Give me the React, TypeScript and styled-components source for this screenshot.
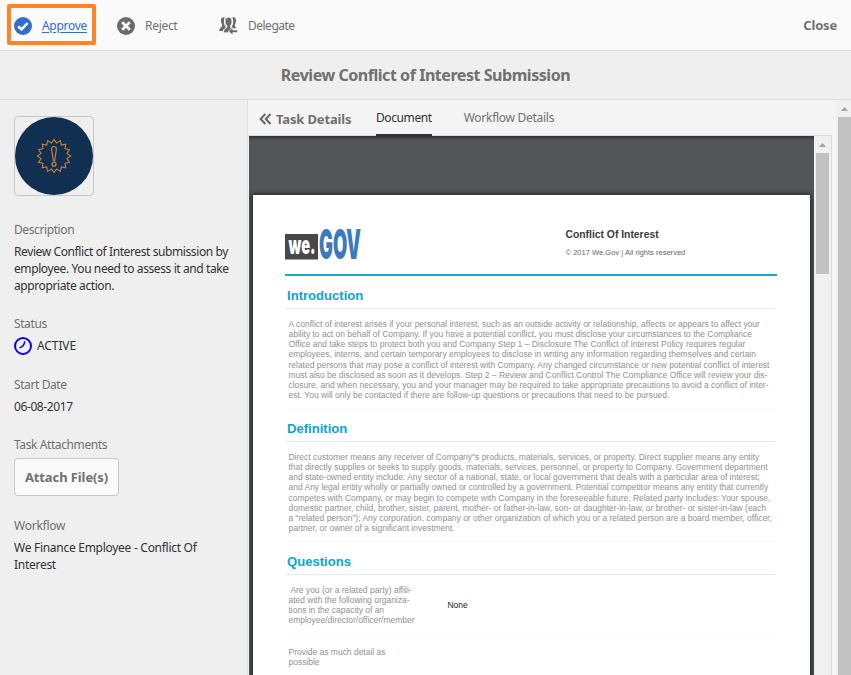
import React from "react";
import styled, { createGlobalStyle } from "styled-components";

const GlobalStyle = createGlobalStyle`
  * { box-sizing: border-box; }
  html, body { margin: 0; padding: 0; }
  body { font-family: "Noto Sans", "Open Sans", sans-serif; overflow: hidden; background: #efefef; }
  p, h1, h2 { margin: 0; font-weight: inherit; }
`;

const Shell = styled.div`
  width: 851px;
  height: 675px;
  display: flex;
  flex-direction: column;
  overflow: hidden;
`;

const Text = styled.span<{ $size?: number; $track?: number; $bold?: boolean; $color?: string }>`
  display: block;
  white-space: nowrap;
  line-height: 17px;
  font-size: ${(p) => p.$size ?? 12}px;
  letter-spacing: ${(p) => p.$track ?? -0.4}px;
  font-weight: ${(p) => (p.$bold ? 700 : 400)};
  color: ${(p) => p.$color ?? "#707070"};
`;

const Toolbar = styled.header`
  flex: none;
  height: 51px;
  display: flex;
  align-items: center;
  background: #fafafa;
  border-bottom: 1px solid #dcdcdc;
  padding-right: 14px;
`;

const Action = styled.button<{ $width: number; $indent?: number; $marked?: boolean }>`
  flex: none;
  width: ${(p) => p.$width}px;
  height: 41px;
  margin: 0 0 1px;
  padding: 3px 0 0 ${(p) => p.$indent ?? 3}px;
  display: flex;
  align-items: center;
  gap: 10px;
  background: none;
  border: 4px solid ${(p) => (p.$marked ? "#ff8427" : "transparent")};
  border-radius: 2px;
  font-family: inherit;
  text-align: left;
  svg { flex: none; }
`;

const Actions = styled.div`
  display: flex;
  flex: 1;
  padding-left: 7px;
`;

const ActionLabel = styled(Text)`
  padding-bottom: 2px;
`;

const Underlined = styled(ActionLabel)`
  text-decoration: underline;
  text-underline-offset: 2px;
`;

const TitleBar = styled.h1`
  flex: none;
  height: 49px;
  display: flex;
  align-items: center;
  justify-content: center;
  border-bottom: 1px solid #dcdcdc;
`;

const Body = styled.div`
  flex: 1;
  min-height: 0;
  display: flex;
`;

const Sidebar = styled.aside`
  flex: none;
  width: 248px;
  padding: 16px 0 0 14px;
  border-right: 1px solid #dedede;
`;

const Thumbnail = styled.div`
  width: 80px;
  height: 80px;
  border: 1px solid #c8c8c8;
  border-radius: 4px;
  svg { display: block; }
`;

const Field = styled.section<{ $top: number }>`
  margin-top: ${(p) => p.$top}px;
  display: flex;
  flex-direction: column;
  gap: 5px;
`;

const StatusRow = styled.div`
  display: flex;
  height: 17px;
  align-items: center;
  gap: 5px;
  svg { flex: none; }
`;

const AttachButton = styled.button`
  width: 105px;
  height: 38px;
  padding: 0;
  display: flex;
  align-items: center;
  justify-content: center;
  border: 1px solid #c8c8c8;
  border-radius: 4px;
  background: #fafafa;
  font-family: inherit;
`;

const Main = styled.main`
  flex: 1;
  min-width: 0;
  display: flex;
  background: #f4f4f4;
`;

const Panel = styled.div`
  width: 584px;
  flex: none;
  display: flex;
  flex-direction: column;
`;

const Tabs = styled.nav`
  flex: none;
  height: 36px;
  display: flex;
  border-bottom: 1px solid #dcdcdc;
`;

const Back = styled.div`
  width: 128px;
  padding: 3px 0 0 11px;
  display: flex;
  align-items: center;
  gap: 4px;
`;

const Tab = styled.div<{ $active?: boolean }>`
  height: 36px;
  margin-right: 32px;
  display: flex;
  align-items: center;
  border-bottom: 2px solid ${(p) => (p.$active ? "#323232" : "transparent")};
  padding-top: 1px;
`;

const Viewer = styled.div`
  flex: 1;
  min-height: 0;
  margin-left: 1px;
  display: flex;
  border-right: 1px solid #dcdcdc;
`;

const Canvas = styled.div`
  width: 565px;
  flex: none;
  padding: 59px 4px 0;
  background: #525659;
  box-shadow: inset 0 4px 3px -2px #303234;
  overflow: hidden;
`;

const Scrollbar = styled.div<{ $start?: number; $pad?: number }>`
  flex: 1;
  display: flex;
  flex-direction: column;
  align-items: center;
  margin-left: ${(p) => p.$start ?? 0}px;
  padding-left: ${(p) => p.$pad ?? 0}px;
  background: #f0f0f0;
  overflow: hidden;
  svg { flex: none; display: block; }
`;

const ScrollThumb = styled.div<{ $height: number }>`
  flex: none;
  width: 13px;
  height: ${(p) => p.$height}px;
  background: #c1c1c1;
`;

const Sheet = styled.article`
  width: 557px;
  height: 520px;
  background: #fff;
  box-shadow: 0 0 5px 1px #1d1f20;
  font-family: "Liberation Sans", Arial, sans-serif;
  padding: 33px 33px 0 32px;
`;

const SheetHead = styled.div`
  height: 48px;
  display: flex;
  border-bottom: 2px solid #1ba6cd;
  svg { display: block; flex: none; overflow: visible; }
`;

const SheetHeadText = styled.div`
  margin-left: 203.500px;
`;

const HeadTitle = styled.p`
  font-size: 10.350px;
  line-height: 14px;
  font-weight: 700;
  color: #3b3b3b;
`;

const HeadNote = styled.p`
  margin-top: 5px;
  font-size: 7.560px;
  line-height: 12px;
  color: #666;
`;

const SectionTitle = styled.h2`
  height: 33px;
  padding: 12px 0 0 2px;
  border-bottom: 1px solid #e2eeee;
  font-size: 13.100px;
  line-height: 16px;
  font-weight: 700;
  color: #0ba5cd;
  width: 491px;
`;

const Copy = styled.div<{ $height: number }>`
  width: 491px;
  height: ${(p) => p.$height}px;
  padding: 10px 0 0 3.500px;
  border-bottom: 1px solid #fafafa;
  font-size: 8.485px;
  line-height: 10.150px;
  color: #919191;
  white-space: pre;
`;

const Question = styled(Copy)`
  display: grid;
  grid-template-columns: 159px 1fr;
`;

const Answer = styled.div`
  padding-top: 15px;
  color: #222;
`;

const ArrowUp = () => (
  <svg width="17" height="17" viewBox="0 0 17 17">
    <path d="M5 11 8.500 7 12 11Z" fill="#a3a3a3" />
  </svg>
);

const ApproveIcon = () => (
  <svg width="18" height="18" viewBox="0 0 18 18">
    <circle cx="9" cy="9" r="9" fill="#326ec8" />
    <path d="M4.200 9.300 7.500 12.400 13.600 6" fill="none" stroke="#fff" strokeWidth="2.500" />
  </svg>
);

const RejectIcon = () => (
  <svg width="18" height="18" viewBox="0 0 18 18">
    <circle cx="9" cy="9" r="9" fill="#6b6b6b" />
    <path d="M5.200 5.200 12.800 12.800M12.800 5.200 5.200 12.800" stroke="#fff" strokeWidth="2.700" />
  </svg>
);

const DelegateIcon = () => (
  <svg width="19" height="18" viewBox="0 0 19 18" fill="#6b6b6b">
    <path d="M5.700.5C3.700-.2 1.800.9 1.900 3.500c0 1.700.5 2.500 1 3.600.4 1.300.2 2.400-.6 3.100C1.300 11 .3 11.700.2 14h3.600c.4-1.500 1.300-2 2.600-2.700.5-.5.4-1.200-.1-1.900C5 7.700 4.300 3.200 5.700.5Z" />
    <path d="M13.300.5c2-.7 3.800.4 3.700 3 0 1.700-.4 2.600-.9 3.700-.5 1.300-.2 2.400.6 3.100l1.200.9h-4.600c-.7-.5-.8-1-.3-1.900 1.200-1.900 1.800-6.100.3-8.800Z" />
    <path d="M9.500.2c-2.400 0-3.600 1.600-3.500 4 .1 2 .8 3.200 1.600 4.300.5 1.100.2 2-.7 2.700-1.400.8-2.300 1.300-2.500 4.600h5l-.2-1.100 3.300-2.900c-.9-1-1.300-2.100-.8-3.100.8-1.200 1.300-2.500 1.300-4.400C13 1.800 11.900.2 9.500.2Z" stroke="#fafafa" strokeWidth=".8" />
    <path d="m13.700 10.600-4.200 3.600 4.200 3.700v-2.400h4.700v-2.400h-4.700Z" stroke="#fafafa" strokeWidth=".5" />
  </svg>
);

const BURST = Array.from({ length: 32 }, (_, i) => {
  const a = (i * Math.PI) / 16 - Math.PI / 2;
  const r = i % 2 ? 13.2 : 16.6;
  return `${(39 + r * Math.cos(a)).toFixed(2)},${(39 + r * Math.sin(a)).toFixed(2)}`;
}).join(" ");

const TaskBadge = () => (
  <svg width="78" height="78" viewBox="0 0 78 78">
    <circle cx="39" cy="39" r="39" fill="#112f50" />
    <g fill="none" stroke="#c9803f" strokeWidth="1.100">
      <polygon points={BURST} />
      <path d="M39 29.500c-1.700 0-2.500 1.200-2.300 3L38.300 43.500h1.400l1.600-11c.2-1.800-.6-3-2.300-3Z" strokeWidth="1.200" />
      <circle cx="39" cy="47.200" r="2" strokeWidth="1.200" />
    </g>
  </svg>
);

const ClockIcon = () => (
  <svg width="18" height="18" viewBox="0 0 18 18" fill="none" stroke="#0b00f5">
    <circle cx="9" cy="9" r="8" strokeWidth="2" />
    <path d="M10.700 4.300C10.500 8 9 10 5.500 10.800" strokeWidth="1.500" />
  </svg>
);

const Chevrons = () => (
  <svg width="13" height="12" viewBox="0 0 13 12" fill="none" stroke="#666" strokeWidth="2">
    <path d="M6.300 1 1.600 6l4.700 5M11.500 1 6.800 6l4.700 5" />
  </svg>
);

const Logo = () => (
  <svg width="77" height="34" viewBox="0 0 77 34" fontFamily="Inter, sans-serif" fontWeight="900">
    <rect x="0" y="6" width="33" height="25.500" fill="#484848" />
    <text x="3.500" y="26" fontSize="26" fill="#fff" textLength="27" lengthAdjust="spacingAndGlyphs">we.</text>
    <text x="34" y="31" fontSize="41" fill="#3c79bd" textLength="42" lengthAdjust="spacingAndGlyphs">GOV</text>
  </svg>
);

const INTRO = `A conflict of interest arises if your personal interest, such as an outside activity or relationship, affects or appears to affect your
ability to act on behalf of Company. If you have a potential conflict, you must disclose your circumstances to the Compliance
Office and take steps to protect both you and Company Step 1 – Disclosure The Conflict of Interest Policy requires regular
employees, interns, and certain temporary employees to disclose in writing any information regarding themselves and certain
related persons that may pose a conflict of interest with Company. Any changed circumstance or new potential conflict of interest
must also be disclosed as soon as it develops. Step 2 – Review and Conflict Control The Compliance Office will review your dis-
closure, and when necessary, you and your manager may be required to take appropriate precautions to avoid a conflict of inter-
est. You will only be contacted if there are follow-up questions or precautions that need to be pursued.`;

const DEFINITION = `Direct customer means any receiver of Company"s products, materials, services, or property. Direct supplier means any entity
that directly supplies or seeks to supply goods, materials, services, personnel, or property to Company. Government department
and state-owned entity include: Any sector of a national, state, or local government that deals with a particular area of interest;
and Any legal entity wholly or partially owned or controlled by a government. Potential competitor means any entity that currently
competes with Company, or may begin to compete with Company in the foreseeable future. Related party includes: Your spouse,
domestic partner, child, brother, sister, parent, mother- or father-in-law, son- or daughter-in-law, or brother- or sister-in-law (each
a “related person”); Any corporation, company or other organization of which you or a related person are a board member, officer,
partner, or owner of a significant investment.`;

const QUESTION = ` Are you (or a related party) affili-
ated with the following organiza-
tions in the capacity of an
employee/director/officer/member`;

const DARK = "#323232";

export default function App() {
  return (
    <Shell>
      <GlobalStyle />
      <Toolbar>
        <Actions>
          <Action $width={89} $marked>
            <ApproveIcon />
            <Underlined $color="#326ec8" $track={-0.3}>Approve</Underlined>
          </Action>
          <Action $width={102} $indent={17}>
            <RejectIcon />
            <ActionLabel $track={-0.3}>Reject</ActionLabel>
          </Action>
          <Action $width={110} $indent={17}>
            <DelegateIcon />
            <ActionLabel $track={-0.5}>Delegate</ActionLabel>
          </Action>
        </Actions>
        <Text $bold $size={13} $track={-0.2}>Close</Text>
      </Toolbar>
      <TitleBar>
        <Text $bold $size={16} $track={-0.45}>Review Conflict of Interest Submission</Text>
      </TitleBar>
      <Body>
        <Sidebar>
          <Thumbnail><TaskBadge /></Thumbnail>
          <Field $top={25}>
            <Text>Description</Text>
            <div>
              <Text $color={DARK}>Review Conflict of Interest submission by</Text>
              <Text $color={DARK}>employee. You need to assess it and take</Text>
              <Text $color={DARK}>appropriate action.</Text>
            </div>
          </Field>
          <Field $top={21}>
            <Text>Status</Text>
            <StatusRow><ClockIcon /><Text $color={DARK} $track={-0.1}>ACTIVE</Text></StatusRow>
          </Field>
          <Field $top={22}>
            <Text>Start Date</Text>
            <Text $color={DARK}>06-08-2017</Text>
          </Field>
          <Field $top={21}>
            <Text>Task Attachments</Text>
            <AttachButton><Text $bold $size={13} $track={-0.1}>Attach File(s)</Text></AttachButton>
          </Field>
          <Field $top={21}>
            <Text $track={-0.25}>Workflow</Text>
            <div>
              <Text $color={DARK} $track={-0.28}>We Finance Employee - Conflict Of</Text>
              <Text $color={DARK} $track={-0.28}>Interest</Text>
            </div>
          </Field>
        </Sidebar>
        <Main>
          <Panel>
            <Tabs>
              <Back><Chevrons /><Text $bold $size={13} $track={-0.15}>Task Details</Text></Back>
              <Tab $active><Text $color={DARK}>Document</Text></Tab>
              <Tab><Text $track={-0.28}>Workflow Details</Text></Tab>
            </Tabs>
            <Viewer>
              <Canvas>
                <Sheet>
                  <SheetHead>
                    <Logo />
                    <SheetHeadText>
                      <HeadTitle>Conflict Of Interest</HeadTitle>
                      <HeadNote>© 2017 We.Gov | All rights reserved</HeadNote>
                    </SheetHeadText>
                  </SheetHead>
                  <SectionTitle>Introduction</SectionTitle>
                  <Copy $height={100}>{INTRO}</Copy>
                  <SectionTitle>Definition</SectionTitle>
                  <Copy $height={100}>{DEFINITION}</Copy>
                  <SectionTitle>Questions</SectionTitle>
                  <Question $height={62}>
                    <div>{QUESTION}</div>
                    <Answer>None</Answer>
                  </Question>
                  <Copy $height={50}>{"Provide as much detail as\npossible"}</Copy>
                </Sheet>
              </Canvas>
              <Scrollbar><ArrowUp /><ScrollThumb $height={121} /></Scrollbar>
            </Viewer>
          </Panel>
          <Scrollbar $start={4} $pad={1}><ArrowUp /><ScrollThumb $height={600} /></Scrollbar>
        </Main>
      </Body>
    </Shell>
  );
}
